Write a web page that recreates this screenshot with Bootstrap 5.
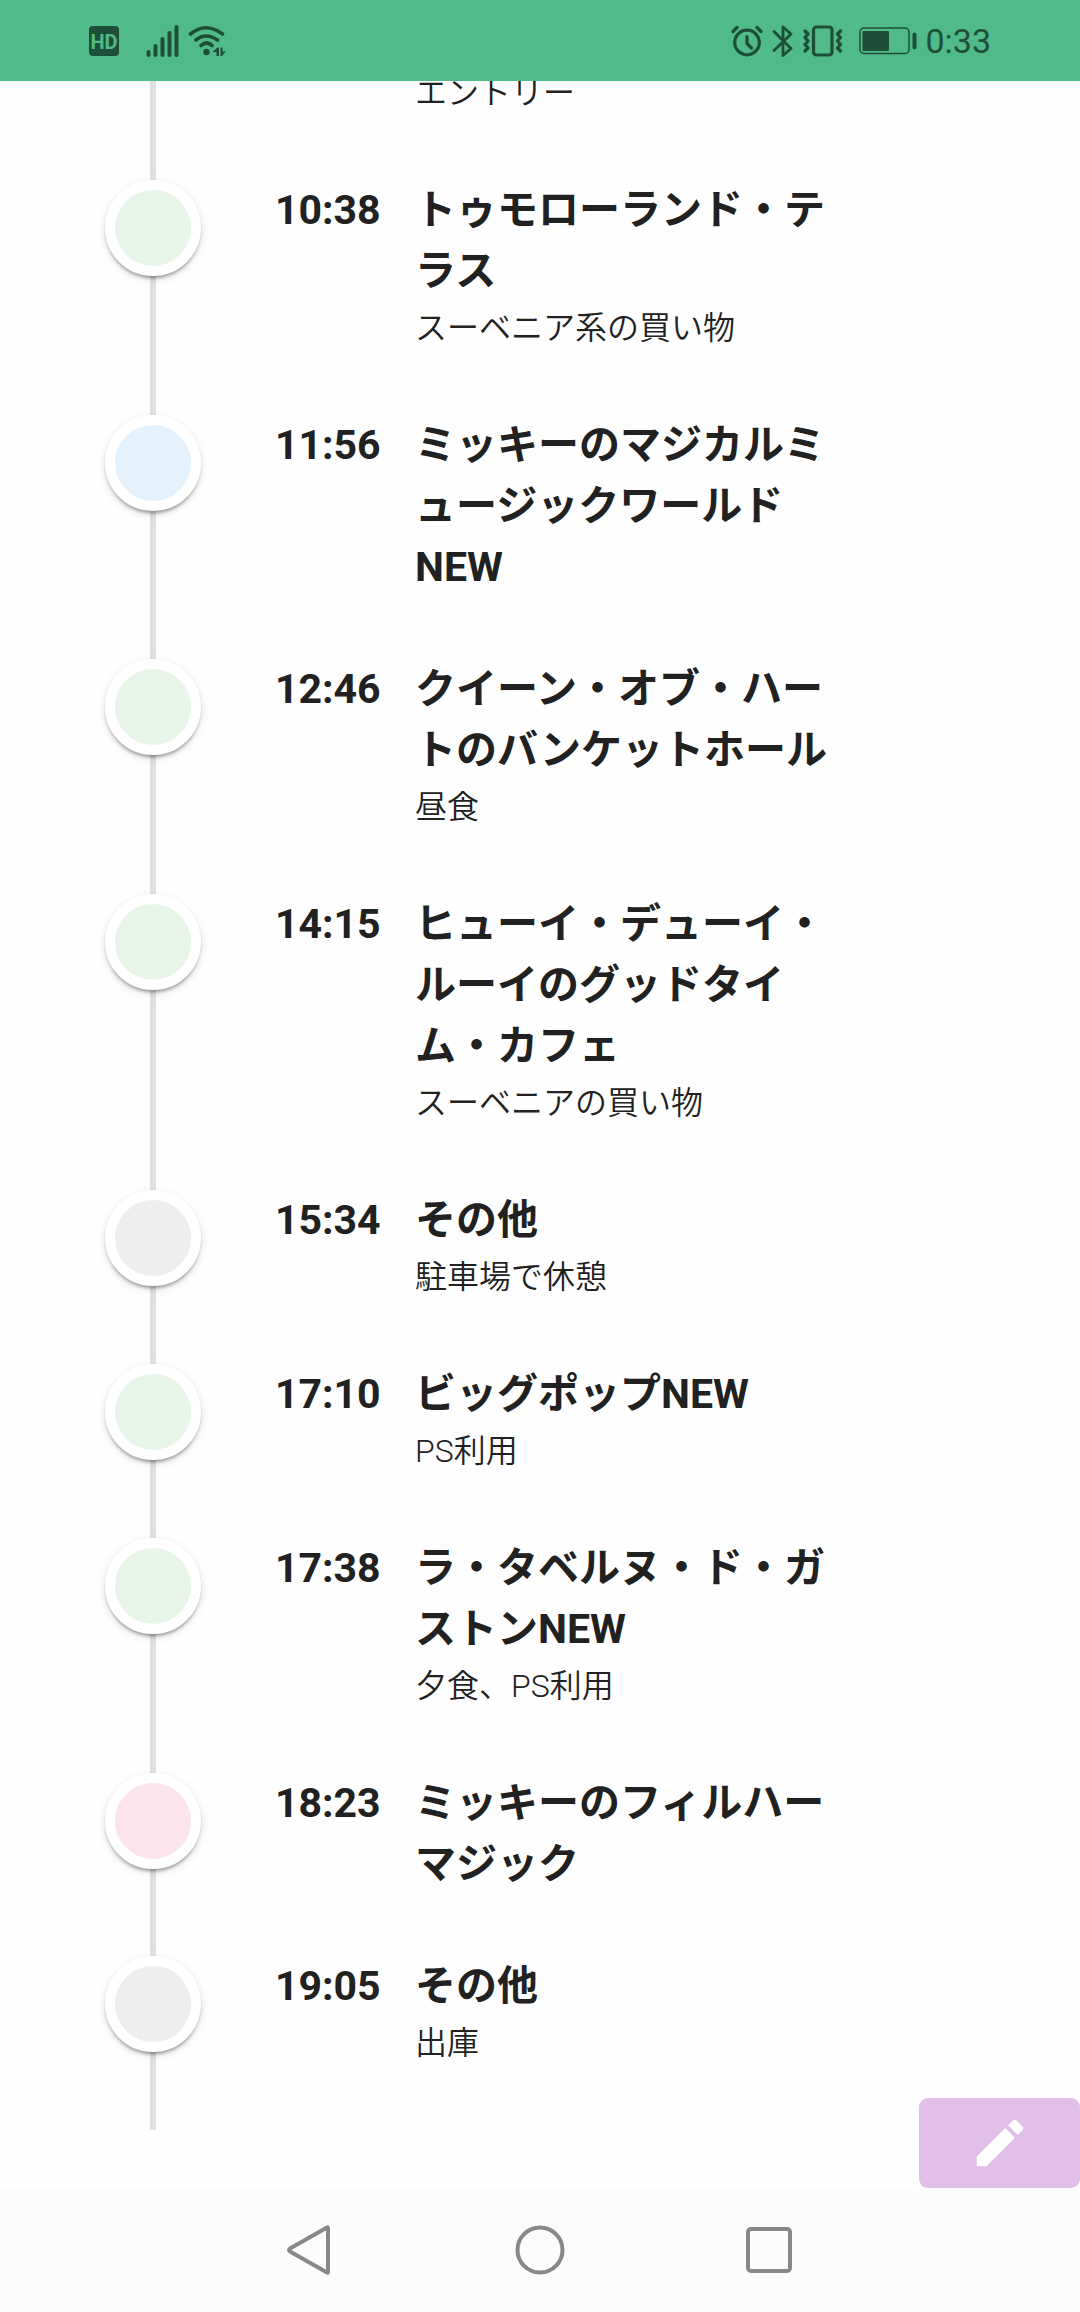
<!DOCTYPE html>
<html lang="ja">
<head>
<meta charset="utf-8">
<meta name="viewport" content="width=device-width, initial-scale=1">
<title>タイムライン</title>
<link rel="stylesheet" href="https://cdn.jsdelivr.net/npm/bootstrap@5.3.0/dist/css/bootstrap.min.css">
<style>
  :root { --bar: #50ba88; --ink: #212121; --status: #1d4f38; }
  body { font-family: Roboto, "Noto Sans CJK JP", sans-serif; color: var(--ink); background: #fefefe; }
  svg { display: block; flex: none; }

  .status-bar { height: 81px; padding: 0 89px; background: var(--bar); color: var(--status); }
  .hd-tag { width: 30px; height: 30px; border-radius: 4px; background: var(--status); color: var(--bar); font-size: 20px; line-height: 32px; }
  .clock { font-size: 34px; line-height: 40px; }

  /* the rail is painted behind the dots */
  .timeline { margin-top: -14px; background: linear-gradient(#e0e0e0, #e0e0e0) 150px 0 / 6px 100% no-repeat; }
  .stop { padding: 0 240px 61px 105px; }
  .dot { flex: none; width: 96px; height: 96px; margin: 0 74px -40px 0; border: 10px solid #fff; border-radius: 50%;
         box-shadow: 0 5px 3px -3px rgba(0,0,0,.2), 0 3px 3px rgba(0,0,0,.14), 0 3px 8px rgba(0,0,0,.12); }
  .dot-green { background: #e8f5e9; }
  .dot-blue { background: #e3f2fd; }
  .dot-grey { background: #eee; }
  .dot-pink { background: #fce4ec; }
  .stop-time { flex: none; width: 140px; font-size: 41px; line-height: 61px; font-weight: 700; }
  .stop-title { margin: 0; font-size: 41px; line-height: 61px; font-weight: 700; }
  .stop-note { margin: 0; font-size: 32px; line-height: 52px; font-weight: 350; }
  .stop-cut { padding-left: 415px; }

  .edit-btn { width: 161px; height: 90px; border-radius: 9px; background: #e1bee7; color: #fff; }
  .system-nav { height: 124px; gap: 180px; background: #fcfcfc; color: #888; }
</style>
</head>
<body>
<header class="status-bar sticky-top d-flex align-items-center justify-content-between">
  <div class="d-flex align-items-center">
    <span class="hd-tag fw-bold text-center">HD</span>
    <svg class="ms-4" width="40" height="32" viewBox="0 0 40 32" stroke="currentColor" stroke-width="4" stroke-linecap="round" aria-hidden="true">
      <path d="M5.500 27v3M12.500 21v9M19.500 14v16M26.500 8v22M33.500 2v28"/>
    </svg>
    <svg class="ms-1" width="40" height="32" viewBox="0 0 40 32" fill="none" stroke="currentColor" stroke-width="3.600" stroke-linecap="round" aria-hidden="true">
      <path d="M3.500 9q15-12.500 32 0M9 15q9.500-8 21.500 0M14 20.500q5.500-5 11 0"/>
      <circle cx="19.500" cy="27" r="3.200" fill="currentColor" stroke="none"/>
      <path d="M30.500 22.500h1.500v8.500h-2.500v-4h-4zM33.500 22.500h2v4h3.500l-4 4.500h-1.500z" fill="currentColor" stroke="none"/>
    </svg>
  </div>
  <div class="d-flex align-items-center">
    <svg width="32" height="32" viewBox="0 0 32 32" fill="none" stroke="currentColor" stroke-width="3.200" stroke-linecap="round" stroke-linejoin="round" aria-hidden="true">
      <circle cx="16" cy="17.500" r="12.300"/>
      <path d="M16 11.500v7l4.500 4.500M2 6.500l4-4M30 6.500l-4-4"/>
    </svg>
    <svg class="ms-2" width="24" height="32" viewBox="0 0 24 32" fill="none" stroke="currentColor" stroke-width="2.800" stroke-linecap="round" stroke-linejoin="round" aria-hidden="true">
      <path d="M3 6.500l17 17-8 7V2l8 7L3 25.500"/>
    </svg>
    <svg class="ms-2" width="40" height="32" viewBox="1 0 40 32" fill="none" stroke="currentColor" stroke-width="3.200" stroke-linejoin="round" stroke-linecap="round" aria-hidden="true">
      <rect x="11.500" y="2" width="18.500" height="28" rx="3"/>
      <path d="M3 6l3 3-3 3.500 3 3.500-3 3.500 3 3.500-3 3M38.500 6l-3 3 3 3.500-3 3.500 3 3.500-3 3.500 3 3"/>
    </svg>
    <svg class="ms-3" width="58" height="28" viewBox="0 0 58 28" fill="currentColor" aria-hidden="true">
      <rect x="1" y="1" width="49" height="25.500" rx="4" fill="none" stroke="currentColor" stroke-width="1.500"/>
      <rect x="3.500" y="4" width="26.500" height="20" rx="1"/>
      <rect x="53.500" y="5.500" width="4" height="17" rx="2"/>
    </svg>
    <span class="clock ms-2">0:33</span>
  </div>
</header>

<main>
  <ol class="timeline list-unstyled mb-0">
    <li class="stop stop-cut"><p class="stop-note">エントリー</p></li>
    <li class="stop d-flex align-items-start">
      <span class="dot dot-green"></span>
      <time class="stop-time">10:38</time>
      <div class="flex-grow-1"><h2 class="stop-title">トゥモローランド・テラス</h2><p class="stop-note">スーベニア系の買い物</p></div>
    </li>
    <li class="stop d-flex align-items-start">
      <span class="dot dot-blue"></span>
      <time class="stop-time">11:56</time>
      <div class="flex-grow-1"><h2 class="stop-title">ミッキーのマジカルミュージックワールドNEW</h2></div>
    </li>
    <li class="stop d-flex align-items-start">
      <span class="dot dot-green"></span>
      <time class="stop-time">12:46</time>
      <div class="flex-grow-1"><h2 class="stop-title">クイーン・オブ・ハートのバンケットホール</h2><p class="stop-note">昼食</p></div>
    </li>
    <li class="stop d-flex align-items-start">
      <span class="dot dot-green"></span>
      <time class="stop-time">14:15</time>
      <div class="flex-grow-1"><h2 class="stop-title">ヒューイ・デューイ・ルーイのグッドタイム・カフェ</h2><p class="stop-note">スーベニアの買い物</p></div>
    </li>
    <li class="stop d-flex align-items-start">
      <span class="dot dot-grey"></span>
      <time class="stop-time">15:34</time>
      <div class="flex-grow-1"><h2 class="stop-title">その他</h2><p class="stop-note">駐車場で休憩</p></div>
    </li>
    <li class="stop d-flex align-items-start">
      <span class="dot dot-green"></span>
      <time class="stop-time">17:10</time>
      <div class="flex-grow-1"><h2 class="stop-title">ビッグポップNEW</h2><p class="stop-note">PS利用</p></div>
    </li>
    <li class="stop d-flex align-items-start">
      <span class="dot dot-green"></span>
      <time class="stop-time">17:38</time>
      <div class="flex-grow-1"><h2 class="stop-title">ラ・タベルヌ・ド・ガストンNEW</h2><p class="stop-note">夕食、PS利用</p></div>
    </li>
    <li class="stop d-flex align-items-start">
      <span class="dot dot-pink"></span>
      <time class="stop-time">18:23</time>
      <div class="flex-grow-1"><h2 class="stop-title">ミッキーのフィルハーマジック</h2></div>
    </li>
    <li class="stop d-flex align-items-start">
      <span class="dot dot-grey"></span>
      <time class="stop-time">19:05</time>
      <div class="flex-grow-1"><h2 class="stop-title">その他</h2><p class="stop-note">出庫</p></div>
    </li>
  </ol>
</main>

<div class="fixed-bottom">
  <div class="d-flex justify-content-end">
    <button type="button" class="edit-btn border-0 p-0 d-flex align-items-center justify-content-center" aria-label="編集">
      <svg width="62" height="62" viewBox="0 0 24 24" fill="currentColor" aria-hidden="true"><path d="M20.710 7.040c.39-.39.39-1.040 0-1.410l-2.340-2.340c-.37-.39-1.020-.39-1.410 0l-1.840 1.830 3.750 3.750M3 17.250V21h3.750L17.810 9.930l-3.750-3.750L3 17.250z"/></svg>
    </button>
  </div>
  <nav class="system-nav d-flex align-items-center justify-content-center">
    <button type="button" class="btn border-0 p-0 text-reset" aria-label="戻る">
      <svg width="50" height="50" viewBox="0 0 50 50" fill="none" stroke="currentColor" stroke-width="4" stroke-linejoin="round" aria-hidden="true"><path d="M43 3v44q0 1-1 .5L5 26.500q-2-1.500 0-3L42 2.500q1-.5 1 .5z"/></svg>
    </button>
    <button type="button" class="btn border-0 p-0 text-reset" aria-label="ホーム">
      <svg width="50" height="50" viewBox="0 0 50 50" fill="none" stroke="currentColor" stroke-width="4" aria-hidden="true"><circle cx="25" cy="25" r="22.500"/></svg>
    </button>
    <button type="button" class="btn border-0 p-0 text-reset" aria-label="履歴">
      <svg width="50" height="50" viewBox="0 0 50 50" fill="none" stroke="currentColor" stroke-width="4" aria-hidden="true"><rect x="3" y="4" width="42" height="42" rx="3"/></svg>
    </button>
  </nav>
</div>
<script src="https://cdn.jsdelivr.net/npm/bootstrap@5.3.0/dist/js/bootstrap.bundle.min.js"></script>
</body>
</html>
